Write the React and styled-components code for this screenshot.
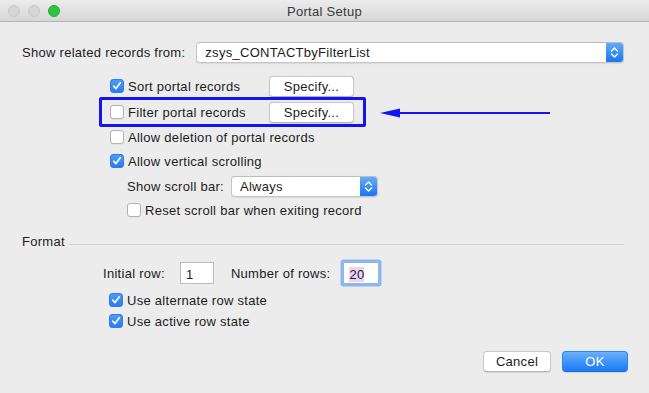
import React from 'react';
import styled, { createGlobalStyle } from 'styled-components';

const Global = createGlobalStyle`
  html, body { margin: 0; padding: 0; background: #ececec; }
  body { font-family: "Liberation Sans", Arial, sans-serif; font-size: 13px; letter-spacing: 0.28px; color: #1c1c1c; }
  #root { width: 649px; height: 393px; }
`;

const Window = styled.div`
  width: 649px;
  height: 393px;
  background: #ececec;
  display: flex;
  flex-direction: column;
  overflow: hidden;
`;

const TitleBar = styled.div`
  height: 22px;
  flex: none;
  box-sizing: border-box;
  display: grid;
  grid-template-columns: 1fr auto 1fr;
  align-items: center;
  background: linear-gradient(#ececec, #d6d6d6);
  border-bottom: 1px solid #b4b4b4;
`;

const Lights = styled.div`
  display: flex;
  gap: 8px;
  padding-left: 8px;
`;

const Light = styled.span`
  width: 12px;
  height: 12px;
  border-radius: 50%;
  box-sizing: border-box;
  background: ${p => (p.$green ? '#2bc63f' : '#d6d6d6')};
  border: 1px solid ${p => (p.$green ? '#25a933' : '#c6c6c6')};
`;

const Title = styled.div`
  font-size: 13px;
  color: #3a3a3a;
  padding-top: 1px;
`;

const Content = styled.div`
  flex: 1;
  display: flex;
  flex-direction: column;
  padding: 20px 25px 21px 22px;
`;

const SourceRow = styled.div`
  display: flex;
  align-items: center;
  gap: 11px;
`;

const Select = styled.div`
  height: 21px;
  box-sizing: border-box;
  flex: ${p => (p.$width ? 'none' : '1')};
  width: ${p => (p.$width ? `${p.$width}px` : 'auto')};
  display: flex;
  align-items: center;
  background: #fff;
  border: 1px solid #c6c6c6;
  border-top-color: #bdbdbd;
  border-radius: 4px;
  overflow: hidden;
  box-shadow: 0 0.5px 1px rgba(0, 0, 0, 0.08);
`;

const SelectText = styled.span`
  flex: 1;
  padding-left: 8px;
  color: #1c1c1c;
`;

const Stepper = styled.span`
  width: 17px;
  height: 100%;
  flex: none;
  display: flex;
  align-items: center;
  justify-content: center;
  background: linear-gradient(#62abfa, #1b76f1);
`;

const Options = styled.div`
  display: flex;
  flex-direction: column;
  margin-left: 88px;
  margin-top: 12px;
`;

const OptRow = styled.div`
  display: flex;
  align-items: center;
  height: ${p => p.$h || 20}px;
  margin-top: ${p => p.$mt || 0}px;
  padding-left: ${p => p.$indent || 0}px;
`;

const CheckLabel = styled.label`
  display: flex;
  align-items: center;
  gap: 4px;
  min-width: ${p => p.$min || 0}px;
  white-space: nowrap;
`;

const Box = styled.span`
  width: 14px;
  height: 14px;
  box-sizing: border-box;
  border-radius: 3px;
  flex: none;
  display: flex;
  align-items: center;
  justify-content: center;
  background: ${p => (p.$checked ? 'linear-gradient(#4c9bf9, #2a7cf1)' : '#fff')};
  border: 1px solid ${p => (p.$checked ? '#2f7ee8' : '#b3b3b3')};
  box-shadow: ${p => (p.$checked ? 'none' : '0 0.5px 0.5px rgba(0,0,0,0.08)')};
`;

const Button = styled.button`
  height: 21px;
  width: ${p => p.$w}px;
  box-sizing: border-box;
  font-family: inherit;
  font-size: 13px;
  letter-spacing: inherit;
  padding: 0;
  border-radius: 4px;
  color: ${p => (p.$primary ? '#fff' : '#1c1c1c')};
  background: ${p => (p.$primary ? 'linear-gradient(#69b1fb, #1a7af5)' : '#fff')};
  border: 1px solid ${p => (p.$primary ? '#2f86f3' : '#c8c8c8')};
  border-bottom-color: ${p => (p.$primary ? '#1968e0' : '#b4b4b4')};
  box-shadow: 0 0.5px 1px rgba(0, 0, 0, 0.1);
`;

const Highlight = styled.div`
  position: relative;
  box-sizing: border-box;
  width: 267px;
  height: 30px;
  margin-left: -11px;
  padding-left: 8px;
  border: 3px solid #1414f2;
  border-radius: 2px;
  display: flex;
  align-items: center;
`;

const Arrow = styled.svg`
  position: absolute;
  left: 278px;
  top: 7px;
`;

const SectionHead = styled.div`
  display: flex;
  align-items: center;
  gap: 4px;
  height: 16px;
  margin-top: 13px;
`;

const Rule = styled.div`
  flex: 1;
  height: 1px;
  background: #d2d2d2;
  margin-top: 7px;
`;

const FieldRow = styled.div`
  display: flex;
  align-items: center;
  height: 22px;
  margin-top: 13px;
  padding-left: 81px;
`;

const FieldLabel = styled.span`
  margin-right: ${p => p.$gap}px;
`;

const Input = styled.div`
  width: ${p => p.$w}px;
  height: 22px;
  box-sizing: border-box;
  background: #fff;
  border: 1px solid ${p => (p.$focus ? '#8fb6e6' : '#bdbdbd')};
  box-shadow: ${p => (p.$focus ? '0 0 0 2.5px #8ab8ef' : 'none')};
  border-radius: ${p => (p.$focus ? '1px' : '0')};
  margin-right: ${p => p.$mr || 0}px;
  display: flex;
  align-items: center;
  padding-left: 5px;
  padding-top: 2px;
`;

const Selected = styled.span`
  background: #ecd3f6;
`;

const FormatChecks = styled.div`
  display: flex;
  flex-direction: column;
  margin-left: 87px;
  margin-top: 6px;
`;

const Footer = styled.div`
  margin-top: auto;
  margin-right: -4px;
  display: flex;
  justify-content: flex-end;
  gap: 11px;
`;

const Check = () => (
  <svg width="10" height="10" viewBox="0 0 10 10">
    <path d="M1.8 5.2 L4 7.6 L8.3 1.8" fill="none" stroke="#fff" strokeWidth="1.7" strokeLinecap="round" strokeLinejoin="round" />
  </svg>
);

const Chevrons = () => (
  <svg width="9" height="13" viewBox="0 0 9 13">
    <path d="M1.5 5 L4.5 2 L7.5 5" fill="none" stroke="#fff" strokeWidth="1.4" strokeLinecap="round" strokeLinejoin="round" />
    <path d="M1.5 8 L4.5 11 L7.5 8" fill="none" stroke="#fff" strokeWidth="1.4" strokeLinecap="round" strokeLinejoin="round" />
  </svg>
);

const CheckBox = ({ checked, label, min }) => (
  <CheckLabel $min={min}>
    <Box $checked={checked}>{checked && <Check />}</Box>
    <span>{label}</span>
  </CheckLabel>
);

export default function App() {
  return (
    <Window>
      <Global />
      <TitleBar>
        <Lights>
          <Light />
          <Light />
          <Light $green />
        </Lights>
        <Title>Portal Setup</Title>
        <span />
      </TitleBar>
      <Content>
        <SourceRow>
          <span>Show related records from:</span>
          <Select>
            <SelectText>zsys_CONTACTbyFilterList</SelectText>
            <Stepper><Chevrons /></Stepper>
          </Select>
        </SourceRow>

        <Options>
          <OptRow $h={22}>
            <CheckBox checked label="Sort portal records" min={159} />
            <Button $w={85}>Specify...</Button>
          </OptRow>
          <Highlight>
            <CheckBox label="Filter portal records" min={159} />
            <Button $w={85}>Specify...</Button>
            <Arrow width="172" height="12" viewBox="0 0 172 12">
              <polygon points="0,6 20,1.5 20,10.5" fill="#1414f2" />
              <rect x="18" y="5" width="152" height="2" fill="#1414f2" />
            </Arrow>
          </Highlight>
          <OptRow>
            <CheckBox label="Allow deletion of portal records" />
          </OptRow>
          <OptRow $mt={4}>
            <CheckBox checked label="Allow vertical scrolling" />
          </OptRow>
          <OptRow $h={22} $mt={4} $indent={17}>
            <FieldLabel $gap={7}>Show scroll bar:</FieldLabel>
            <Select $width={147}>
              <SelectText>Always</SelectText>
              <Stepper><Chevrons /></Stepper>
            </Select>
          </OptRow>
          <OptRow $mt={3} $indent={17}>
            <CheckBox label="Reset scroll bar when exiting record" />
          </OptRow>
        </Options>

        <SectionHead>
          <span>Format</span>
          <Rule />
        </SectionHead>

        <FieldRow>
          <FieldLabel $gap={15}>Initial row:</FieldLabel>
          <Input $w={34} $mr={17}>1</Input>
          <FieldLabel $gap={13}>Number of rows:</FieldLabel>
          <Input $w={36} $focus><Selected>20</Selected></Input>
        </FieldRow>

        <FormatChecks>
          <OptRow>
            <CheckBox checked label="Use alternate row state" />
          </OptRow>
          <OptRow $mt={1}>
            <CheckBox checked label="Use active row state" />
          </OptRow>
        </FormatChecks>

        <Footer>
          <Button $w={68}>Cancel</Button>
          <Button $w={66} $primary>OK</Button>
        </Footer>
      </Content>
    </Window>
  );
}
